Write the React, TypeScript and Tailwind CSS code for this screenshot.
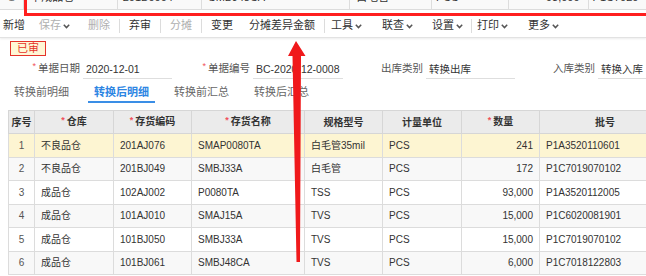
import React from "react";

type Row = {
  no: number;
  wh: string;
  code: string;
  name: string;
  spec: string;
  unit: string;
  qty: string;
  batch: string;
};

const ROWS: Row[] = [
  { no: 1, wh: "不良品仓", code: "201AJ076", name: "SMAP0080TA", spec: "白毛管35mil", unit: "PCS", qty: "241", batch: "P1A3520110601" },
  { no: 2, wh: "不良品仓", code: "201BJ049", name: "SMBJ33A", spec: "白毛管", unit: "PCS", qty: "172", batch: "P1C7019070102" },
  { no: 3, wh: "成品仓", code: "102AJ002", name: "P0080TA", spec: "TSS", unit: "PCS", qty: "93,000", batch: "P1A3520112005" },
  { no: 4, wh: "成品仓", code: "101AJ010", name: "SMAJ15A", spec: "TVS", unit: "PCS", qty: "15,000", batch: "P1C6020081901" },
  { no: 5, wh: "成品仓", code: "101BJ050", name: "SMBJ33A", spec: "TVS", unit: "PCS", qty: "15,000", batch: "P1C7019070102" },
  { no: 6, wh: "成品仓", code: "101BJ061", name: "SMBJ48CA", spec: "TVS", unit: "PCS", qty: "6,000", batch: "P1C7018122803" },
];

function Caret() {
  return (
    <svg width="7" height="5" viewBox="0 0 7 5" className="ml-[2px] mt-[1px]">
      <path d="M0.8 0.8 L3.5 3.6 L6.2 0.8" fill="none" stroke="#555" strokeWidth="1.5" />
    </svg>
  );
}

function Sep({ cls = "mx-[9px]" }: { cls?: string }) {
  return <span className={`${cls} h-[14px] w-px bg-[#dcdcdc]`} />;
}

function Tool({ label, dim, caret }: { label: string; dim?: boolean; caret?: boolean }) {
  return (
    <span className={`flex items-center ${dim ? "text-[#b0b0b0]" : "text-[#333]"}`}>
      {label}
      {caret && <Caret />}
    </span>
  );
}

function Star() {
  return <span className="mr-[2px] text-[9px] text-[#f0505a] relative top-[-2px]">*</span>;
}

function Field({
  label,
  value,
  star,
  labelW,
  inputW,
}: {
  label: string;
  value: string;
  star?: boolean;
  labelW: string;
  inputW: string;
}) {
  return (
    <div className="flex h-[20px] items-center">
      <div className={`${labelW} flex items-center justify-end pr-[3px] text-[#555]`}>
        {star && <Star />}
        {label}
      </div>
      <div className={`${inputW} h-[20px] border-b border-[#dedede] pl-[3px] leading-[20px] text-[#333]`}>
        {value}
      </div>
    </div>
  );
}

export default function App() {
  const th = "border border-[#d6d6d6] bg-[#ebebeb] font-bold text-[#333] text-center";
  const td = "border border-[#dcdcdc] px-[6px] text-[#333] whitespace-nowrap overflow-hidden";

  return (
    <div className="relative h-[276px] w-[646px] overflow-hidden bg-white font-['Liberation_Sans','Noto_Sans_CJK_SC',sans-serif]">
      {/* previous row, cut off at the top */}
      <div className="h-[10px] overflow-hidden border-b border-[#dcdcdc] bg-[#f9f9f9]">
        <div className="-mt-[14px] flex h-[23px] items-center text-[11px] text-[#333]">
          <div className="w-[24px] text-center text-[#777]">1</div>
          <div className="flex h-full w-[96px] items-center border-l border-[#ddd] pl-[6px]">半成品仓</div>
          <div className="flex h-full w-[87px] items-center border-l border-[#ddd] pl-[5px]">201B0004</div>
          <div className="flex h-full w-[152px] items-center border-l border-[#ddd] pl-[6px]">SMBJ48CA</div>
          <div className="flex h-full w-[84px] items-center border-l border-[#ddd] pl-[6px]">白毛管</div>
          <div className="flex h-full w-[79px] items-center border-l border-[#ddd] pl-[4px]">PCS</div>
          <div className="flex h-full w-[82px] items-center justify-end border-l border-[#ddd] pr-[8px]">93,000</div>
          <div className="flex h-full w-[60px] items-center border-l border-[#ddd] pl-[4px]">P1C7020</div>
        </div>
      </div>
      <div className="h-[4px]" />

      {/* toolbar */}
      <div className="flex h-[24px] items-center border-b border-[#e2e2e2] pl-[3px] text-[11px] shadow-[0_1px_2px_rgba(0,0,0,0.08)]">
        <Tool label="新增" />
        <span className="ml-[14px]" />
        <Tool label="保存" dim caret />
        <span className="ml-[18px]" />
        <Tool label="删除" dim />
        <Sep />
        <Tool label="弃审" />
        <Sep />
        <Tool label="分摊" dim />
        <Sep />
        <Tool label="变更" />
        <span className="ml-[16px]" />
        <Tool label="分摊差异金额" />
        <Sep cls="ml-[9px] mr-[6px]" />
        <Tool label="工具" caret />
        <span className="ml-[20px]" />
        <Tool label="联查" caret />
        <span className="ml-[19px]" />
        <Tool label="设置" caret />
        <Sep cls="ml-[8px] mr-[5px]" />
        <Tool label="打印" caret />
        <span className="ml-[20px]" />
        <Tool label="更多" caret />
      </div>

      {/* status stamp */}
      <div className="pl-[10px] pt-[3px]">
        <div className="flex h-[15px] w-[36px] items-center justify-center border-[1.5px] border-[#e5332a] bg-[#fff7d6] text-[11px] leading-none text-[#e5332a]">
          已审
        </div>
      </div>

      {/* header fields */}
      <div className="mt-[3px] flex text-[10.5px]">
        <Field label="单据日期" value="2020-12-01" star labelW="w-[83px]" inputW="w-[89px]" />
        <Field label="单据编号" value="BC-2020-12-0008" star labelW="w-[81px]" inputW="w-[90px]" />
        <Field label="出库类别" value="转换出库" labelW="w-[83px]" inputW="w-[89px]" />
        <Field label="入库类别" value="转换入库" labelW="w-[83px]" inputW="w-[90px]" />
      </div>

      {/* tabs */}
      <div className="mt-[1px] flex gap-[13px] pl-[8px] text-[11px]">
        {["转换前明细", "转换后明细", "转换前汇总", "转换后汇总"].map((t, i) => (
          <div
            key={t}
            className={`h-[23px] whitespace-nowrap px-[6px] pt-[4px] leading-[16px] ${
              i === 1
                ? "border-b-2 border-[#3a8ee6] font-bold text-[#2d86e3]"
                : "border-b-2 border-transparent text-[#666]"
            }`}
          >
            {t}
          </div>
        ))}
      </div>

      {/* detail grid */}
      <table className="ml-[8px] mt-[7px] w-[662px] table-fixed border-collapse text-[10px]">
        <colgroup>
          <col className="w-[26px]" />
          <col className="w-[79px]" />
          <col className="w-[78px]" />
          <col className="w-[113px]" />
          <col className="w-[78px]" />
          <col className="w-[79px]" />
          <col className="w-[78px]" />
          <col className="w-[131px]" />
        </colgroup>
        <thead>
          <tr className="h-[23px]">
            <th className={th}>序号</th>
            <th className={th}><Star />仓库</th>
            <th className={th}><Star />存货编码</th>
            <th className={th}><Star />存货名称</th>
            <th className={th}>规格型号</th>
            <th className={th}>计量单位</th>
            <th className={th}><Star />数量</th>
            <th className={th}>批号</th>
          </tr>
        </thead>
        <tbody>
          {ROWS.map((r) => (
            <tr
              key={r.no}
              className={`h-[23.5px] ${
                r.no === 1 ? "bg-[#fdf5d2]" : r.no % 2 === 0 ? "bg-[#f8f8f8]" : "bg-white"
              }`}
            >
              <td className={`${td} text-center text-[#555]`}>{r.no}</td>
              <td className={td}>{r.wh}</td>
              <td className={td}>{r.code}</td>
              <td className={td}>{r.name}</td>
              <td className={td}>{r.spec}</td>
              <td className={td}>{r.unit}</td>
              <td className={`${td} text-right`}>{r.qty}</td>
              <td className={td}>{r.batch}</td>
            </tr>
          ))}
        </tbody>
      </table>

      {/* annotation overlay: red box and arrow */}
      <div className="absolute left-[24px] top-[-20px] h-[36px] w-[640px] border-[3px] border-[#ff1f1f]" />
      <svg className="pointer-events-none absolute left-0 top-0" width="646" height="276" viewBox="0 0 646 276">
        <polygon
          points="296,41 305.5,56 301,56 300,262 296.5,262 292.5,56 288,56"
          fill="#f0191b"
        />
      </svg>
    </div>
  );
}
